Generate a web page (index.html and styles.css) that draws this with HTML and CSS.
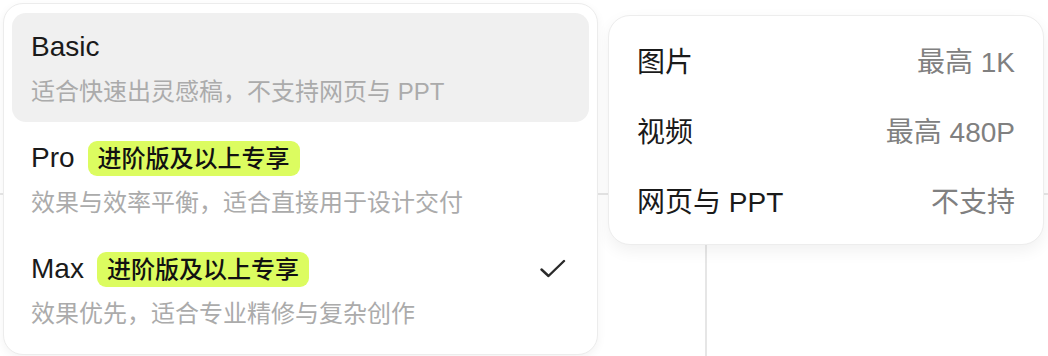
FILE: index.html
```html
<!DOCTYPE html>
<html lang="zh-CN">
<head>
  <meta charset="UTF-8">
  <meta name="viewport" content="width=device-width, initial-scale=1.0">
  <title>模型选择</title>
  <link rel="stylesheet" href="styles.css">
</head>
<body>
  <div class="popovers">
    <div class="model-menu">
      <div class="model active">
        <div class="model-head">
          <span class="model-name">Basic</span>
        </div>
        <p class="model-desc">适合快速出灵感稿，不支持网页与 PPT</p>
      </div>
      <div class="model">
        <div class="model-head">
          <span class="model-name">Pro</span>
          <span class="badge">进阶版及以上专享</span>
        </div>
        <p class="model-desc">效果与效率平衡，适合直接用于设计交付</p>
      </div>
      <div class="model">
        <div class="model-head">
          <span class="model-name">Max</span>
          <span class="badge">进阶版及以上专享</span>
          <svg class="check" width="26" height="20" viewBox="0 0 26 20">
            <path d="M1.5 10.5 L8.5 17 L24 2" fill="none" stroke="#2a2a2a" stroke-width="2.4" stroke-linecap="round" stroke-linejoin="round"/>
          </svg>
        </div>
        <p class="model-desc">效果优先，适合专业精修与复杂创作</p>
      </div>
    </div>

    <div class="spec-card">
      <div class="spec-row">
        <span class="spec-label">图片</span>
        <span class="spec-value">最高 1K</span>
      </div>
      <div class="spec-row">
        <span class="spec-label">视频</span>
        <span class="spec-value">最高 480P</span>
      </div>
      <div class="spec-row">
        <span class="spec-label">网页与 PPT</span>
        <span class="spec-value">不支持</span>
      </div>
    </div>
  </div>
</body>
</html>
```

FILE: styles.css
```css
body {
  margin: 0;
  width: 1048px;
  height: 356px;
  overflow: hidden;
  font-family: "Liberation Sans", "Noto Sans CJK SC", sans-serif;
  color: #1a1a1a;
  background-color: #fff;
  background-image:
    linear-gradient(#e6e6e6, #e6e6e6),
    linear-gradient(#e6e6e6, #e6e6e6);
  background-repeat: no-repeat;
  background-size: 2px 120px, 1048px 2px;
  background-position: 705px 240px, 0 193px;
}

.popovers {
  display: flex;
  align-items: flex-start;
  gap: 10px;
  padding: 3px 0 0 3px;
}

.model-menu {
  width: 595px;
  box-sizing: border-box;
  padding: 9px 8px 10px;
  background: #fff;
  border: 1px solid #ececec;
  border-radius: 20px;
  box-shadow: 0 3px 10px rgba(0, 0, 0, 0.05);
  display: flex;
  flex-direction: column;
  gap: 2px;
}

.model {
  height: 109px;
  box-sizing: border-box;
  padding: 16px 23px 0 19px;
  border-radius: 14px;
}

.model.active {
  background-color: #f0f0f0;
}

.model-head {
  display: flex;
  align-items: center;
  gap: 13px;
  height: 36px;
}

.model-name {
  font-size: 28px;
  line-height: 36px;
}

.badge {
  height: 35px;
  line-height: 35px;
  padding: 0 10px;
  border-radius: 9px;
  background-color: #dcfc60;
  color: #111;
  font-size: 24px;
  font-weight: 500;
}

.check {
  margin-left: auto;
}

.model-desc {
  margin: 10px 0 0;
  font-size: 24px;
  line-height: 34px;
  color: #ababab;
}

.spec-card {
  width: 436px;
  box-sizing: border-box;
  margin-top: 12px;
  padding: 9px 28px;
  background: #fff;
  border: 1px solid #ededed;
  border-radius: 22px;
  box-shadow: 0 6px 16px rgba(0, 0, 0, 0.06);
}

.spec-row {
  display: flex;
  justify-content: space-between;
  align-items: center;
  height: 70px;
  font-size: 28px;
}

.spec-value {
  color: #808080;
}
```
